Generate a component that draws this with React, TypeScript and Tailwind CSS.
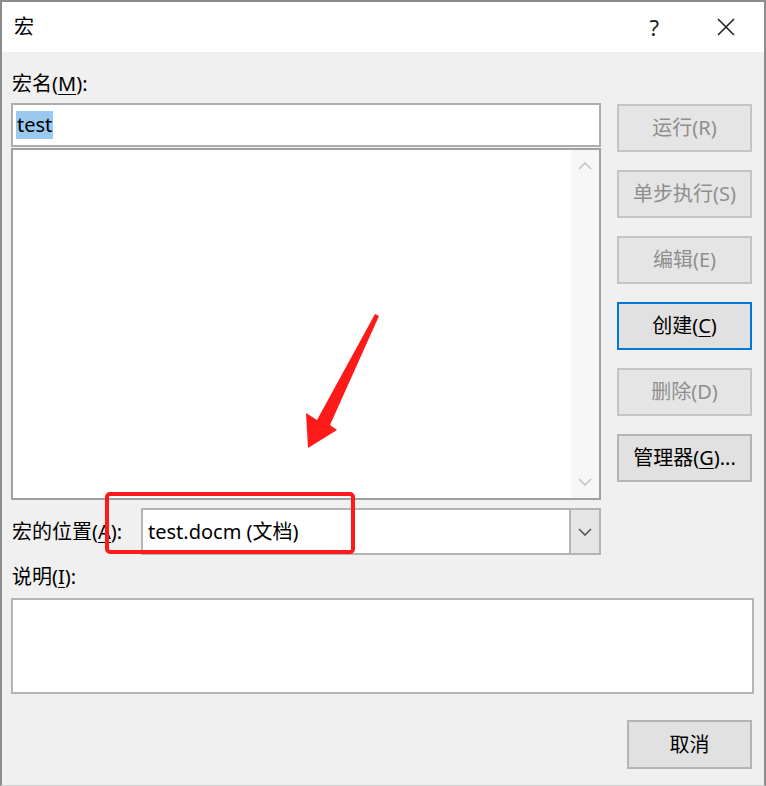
import React from 'react'

const FONT = { fontFamily: "'Noto Sans', 'Noto Sans CJK SC', sans-serif" }

function Key({ k }: { k: string }) {
  return <span className="underline underline-offset-[3px] decoration-1">{k}</span>
}

function DlgButton({
  children,
  disabled,
  focused,
}: {
  children: React.ReactNode
  disabled?: boolean
  focused?: boolean
}) {
  return (
    <div
      className={
        'h-[48px] w-[135px] flex items-center justify-center text-[20px] ' +
        (focused
          ? 'border-2 border-[#0078d7] bg-[#e1e1e1] text-black'
          : disabled
            ? 'border-2 border-[#c4c4c4] bg-[#e5e5e5] text-[#8f8f8f]'
            : 'border-2 border-[#b4b4b4] bg-[#e1e1e1] text-black')
      }
    >
      {children}
    </div>
  )
}

function Chevron({ up, className }: { up?: boolean; className?: string }) {
  return (
    <svg width="14" height="8" viewBox="0 0 14 8" className={className}>
      <path
        d={up ? 'M1 7 L7 1 L13 7' : 'M1 1 L7 7 L13 1'}
        fill="none"
        stroke="currentColor"
        strokeWidth="1.6"
      />
    </svg>
  )
}

export default function App() {
  return (
    <div
      className="relative w-[766px] h-[786px] flex flex-col bg-[#f0f0f0] border-x-2 border-t-2 border-b border-x-[#8c8c8c] border-t-[#8c8c8c] border-b-[#d0d0d0] text-black"
      style={FONT}
    >
      {/* title bar */}
      <div className="h-[50px] bg-white flex items-center pl-[12px] shrink-0">
        <span className="text-[20px] leading-none">宏</span>
        <span className="ml-auto text-[22px] leading-none text-[#222]">?</span>
        <svg width="20" height="20" viewBox="0 0 20 20" className="ml-[57px] mr-[28px]">
          <path d="M2 2 L18 18 M18 2 L2 18" stroke="#222" strokeWidth="1.6" fill="none" />
        </svg>
      </div>

      {/* body */}
      <div className="flex-1 pl-[9px] pr-[10px] pt-[20px]">
        <div className="flex">
          <div className="w-[590px]">
            <div className="ml-[1px] h-[24px] leading-[24px] text-[20px]">
              宏名(<Key k="M" />):
            </div>
            <div className="mt-[7px] h-[44px] border-2 border-[#adadad] bg-white flex items-center pl-[3px]">
              <span className="bg-[#99c9ef] h-[28px] leading-[28px] text-[20px] px-[1px]">test</span>
            </div>
            <div className="mt-[1px] h-[352px] border-2 border-[#a0a0a0] bg-white flex justify-end">
              <div className="w-[28px] bg-[#f7f7f7] flex flex-col items-center justify-between py-[12px] text-[#c4c4c4]">
                <Chevron up />
                <Chevron />
              </div>
            </div>
            <div className="mt-[8px] h-[47px] flex items-center">
              <div className="w-[129px] ml-[1px] text-[20px] whitespace-nowrap">
                宏的位置(<Key k="A" />):
              </div>
              <div className="flex-1 h-full border-2 border-[#b4b4b4] bg-white flex items-center">
                <span className="pl-[5px] text-[20px] flex-1">test.docm (文档)</span>
                <div className="w-[30px] h-full bg-[#e5e5e5] border-l-2 border-[#b4b4b4] flex items-center justify-center text-[#555]">
                  <Chevron />
                </div>
              </div>
            </div>
          </div>

          <div className="ml-[16px] w-[135px] pt-[32px] flex flex-col gap-[18px]">
            <DlgButton disabled>运行(R)</DlgButton>
            <DlgButton disabled>单步执行(S)</DlgButton>
            <DlgButton disabled>编辑(E)</DlgButton>
            <DlgButton focused>
              创建(<Key k="C" />)
            </DlgButton>
            <DlgButton disabled>删除(D)</DlgButton>
            <DlgButton>
              管理器(<Key k="G" />)...
            </DlgButton>
          </div>
        </div>

        <div className="mt-[10px] ml-[1px] h-[24px] leading-[24px] text-[20px]">
          说明(<Key k="I" />):
        </div>
        <div className="mt-[9px] h-[96px] w-[743px] border-2 border-[#b4b4b4] bg-white" />

        <div className="mt-[26px] flex justify-end">
          <div className="h-[49px] w-[125px] mr-[2px] border-2 border-[#b4b4b4] bg-[#e1e1e1] flex items-center justify-center text-[20px]">
            取消
          </div>
        </div>
      </div>

      {/* annotation overlay */}
      <div className="absolute left-[103px] top-[490px] w-[250px] h-[62px] border-4 border-[#ff1a1a] rounded-[5px]" />
      <svg className="absolute left-[298px] top-[306px]" width="84" height="146" viewBox="298 306 84 146">
        <path
          d="M373 312 L377 314 L328 423 L335 428 L306 446 L304 411 L315 418 Z"
          fill="#ff1a1a"
        />
      </svg>
    </div>
  )
}
